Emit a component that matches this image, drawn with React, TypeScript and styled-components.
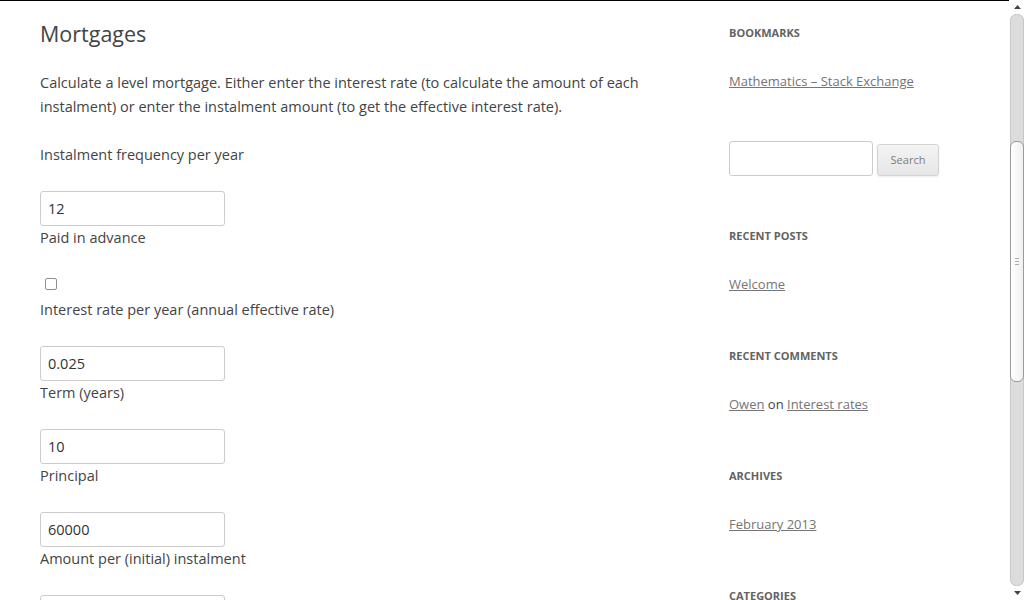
import { FC } from "react";
import styled, { createGlobalStyle } from "styled-components";

const GlobalStyle = createGlobalStyle`
  html, body {
    margin: 0;
    padding: 0;
    height: 600px;
    overflow: hidden;
    background: #fff;
  }
  body {
    font-family: "Open Sans", "Liberation Sans", sans-serif;
    font-size: 14.5px;
    line-height: 24px;
    color: #444;
  }
`;

const Page = styled.div`
  display: flex;
  height: 600px;
`;

const Site = styled.div`
  flex: 1;
  display: flex;
  justify-content: space-between;
  align-items: flex-start;
  padding: 20px 40px 0 40px;
  border-top: 1px solid #000;
  overflow: hidden;
`;

const Main = styled.main`
  width: 605px;
  flex-shrink: 0;
  padding-top: 1px;
`;

const Title = styled.h1`
  margin: 0 0 25px;
  font-size: 21.5px;
  font-weight: normal;
  line-height: 24px;
  color: #444;
`;

const Para = styled.p`
  margin: 0 0 24px;
`;

const FieldGroup = styled.div`
  margin: 0 0 24px;
  display: flex;
  flex-direction: column;
  align-items: flex-start;
`;

const TextInput = styled.input`
  box-sizing: border-box;
  width: 185px;
  height: 35px;
  margin: 0;
  padding: 6px 7px;
  border: 1px solid #ccc;
  border-radius: 3px;
  font-family: inherit;
  font-size: 14.5px;
  color: #333;
  background: #fff;
  outline: none;
`;

const CheckRow = styled.div`
  height: 24px;
  display: flex;
  align-items: flex-start;
`;

const Check = styled.input`
  appearance: none;
  width: 12px;
  height: 12px;
  margin: 4px 0 0 5px;
  border: 1px solid #8f8f8f;
  border-radius: 2px;
  background: #fff;
`;

const Sidebar = styled.aside`
  width: 240px;
  flex-shrink: 0;
  font-size: 13px;
`;

const Widget = styled.section`
  margin-bottom: 48px;
`;

const WidgetTitle = styled.h3`
  margin: 0 0 24px;
  font-size: 11px;
  font-weight: bold;
  line-height: 24px;
  text-transform: uppercase;
  color: #636363;
`;

const WidgetLink = styled.a`
  color: #757575;
  text-decoration: underline;
`;

const WidgetText = styled.div`
  color: #444;
`;

const SearchForm = styled.form`
  display: flex;
  align-items: flex-end;
  gap: 4px;
`;

const SearchInput = styled(TextInput)`
  width: 144px;
`;

const SearchButton = styled.button`
  box-sizing: border-box;
  width: 62px;
  height: 32px;
  padding: 0 0 1px;
  font-family: inherit;
  font-size: 11px;
  color: #7c7c7c;
  background: linear-gradient(to bottom, #f4f4f4, #e6e6e6);
  border: 1px solid #d2d2d2;
  border-radius: 3px;
  box-shadow: 0 1px 2px rgba(64, 64, 64, 0.1);
`;

const ScrollBar = styled.div`
  width: 15px;
  display: flex;
  flex-direction: column;
  background: #fff;
  padding-left: 1px;
  box-sizing: border-box;
`;

const ArrowButton = styled.div`
  height: 14px;
  display: flex;
  align-items: center;
  justify-content: center;
  color: #444;
`;

const Trough = styled.div`
  flex: 1;
  background: #dcdcdc;
  border: 1px solid #c8c8c8;
  border-radius: 6px;
  display: flex;
  flex-direction: column;
`;

const Thumb = styled.div<{ $top: number; $size: number }>`
  margin-top: ${(p) => p.$top}px;
  height: ${(p) => p.$size}px;
  margin-left: -1px;
  margin-right: -1px;
  background: linear-gradient(to right, #ffffff, #f0f0f0);
  border: 1px solid #9a9a9a;
  border-radius: 6px;
  display: flex;
  align-items: center;
  justify-content: center;
`;

const Grip = styled.div`
  width: 4px;
  height: 5px;
  border-top: 1px solid #aaa;
  border-bottom: 1px solid #aaa;
  position: relative;
  &::after {
    content: "";
    position: absolute;
    left: 0;
    right: 0;
    top: 2px;
    border-top: 1px solid #aaa;
  }
`;

const Arrow: FC<{ down?: boolean }> = ({ down }) => (
  <svg width="7" height="4" viewBox="0 0 7 4">
    <path d={down ? "M0 0 L7 0 L3.5 4 Z" : "M0 4 L7 4 L3.5 0 Z"} fill="currentColor" />
  </svg>
);

const fields = [
  { value: "0.025", next: "Term (years)" },
  { value: "10", next: "Principal" },
  { value: "60000", next: "Amount per (initial) instalment" },
];

const App = () => (
  <>
    <GlobalStyle />
    <Page>
      <Site>
        <Main>
          <Title>Mortgages</Title>
          <Para>
            Calculate a level mortgage. Either enter the interest rate (to calculate the amount of each
            instalment) or enter the instalment amount (to get the effective interest rate).
          </Para>
          <Para>Instalment frequency per year</Para>
          <FieldGroup>
            <TextInput defaultValue="12" />
            <span>Paid in advance</span>
          </FieldGroup>
          <FieldGroup>
            <CheckRow>
              <Check type="checkbox" />
            </CheckRow>
            <span>Interest rate per year (annual effective rate)</span>
          </FieldGroup>
          {fields.map((f) => (
            <FieldGroup key={f.value}>
              <TextInput defaultValue={f.value} />
              <span>{f.next}</span>
            </FieldGroup>
          ))}
          <FieldGroup>
            <TextInput defaultValue="" />
          </FieldGroup>
        </Main>
        <Sidebar>
          <Widget>
            <WidgetTitle>Bookmarks</WidgetTitle>
            <WidgetLink href="#">Mathematics – Stack Exchange</WidgetLink>
          </Widget>
          <Widget>
            <SearchForm onSubmit={(e) => e.preventDefault()}>
              <SearchInput />
              <SearchButton type="submit">Search</SearchButton>
            </SearchForm>
          </Widget>
          <Widget>
            <WidgetTitle>Recent Posts</WidgetTitle>
            <WidgetLink href="#">Welcome</WidgetLink>
          </Widget>
          <Widget>
            <WidgetTitle>Recent Comments</WidgetTitle>
            <WidgetText>
              <WidgetLink href="#">Owen</WidgetLink> on <WidgetLink href="#">Interest rates</WidgetLink>
            </WidgetText>
          </Widget>
          <Widget>
            <WidgetTitle>Archives</WidgetTitle>
            <WidgetLink href="#">February 2013</WidgetLink>
          </Widget>
          <Widget>
            <WidgetTitle>Categories</WidgetTitle>
          </Widget>
        </Sidebar>
      </Site>
      <ScrollBar>
        <ArrowButton>
          <Arrow />
        </ArrowButton>
        <Trough>
          <Thumb $top={126} $size={239}>
            <Grip />
          </Thumb>
        </Trough>
        <ArrowButton>
          <Arrow down />
        </ArrowButton>
      </ScrollBar>
    </Page>
  </>
);

export default App;
